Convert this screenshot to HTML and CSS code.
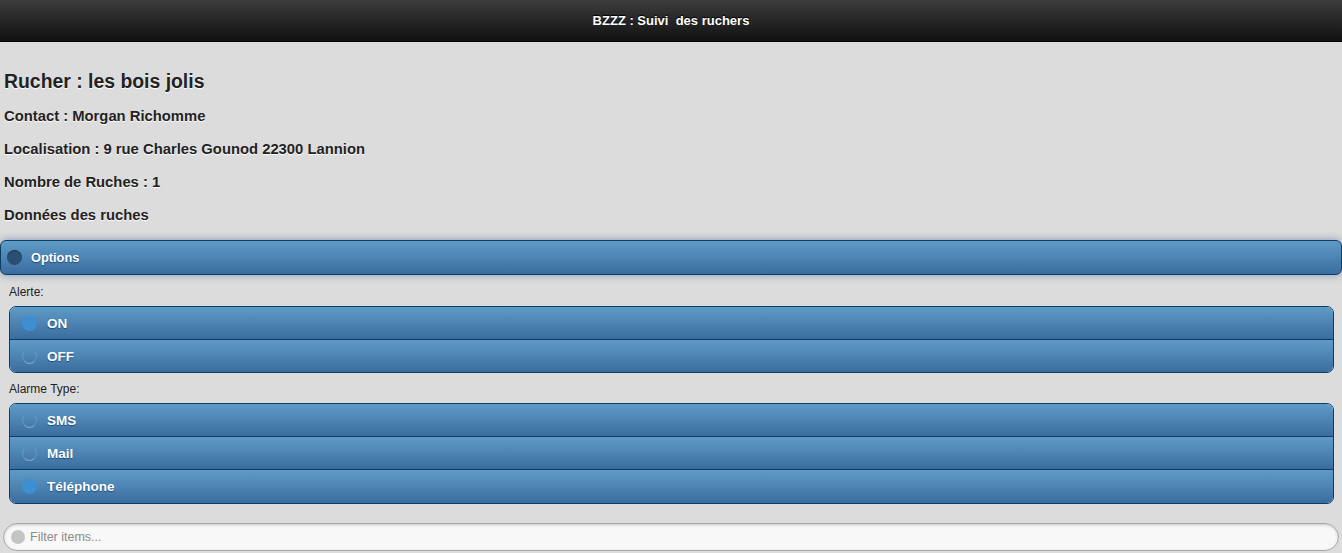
FILE: index.html
```html
<!DOCTYPE html>
<html lang="fr">
<head>
    <meta charset="UTF-8">
    <meta name="viewport" content="width=device-width, initial-scale=1.0">
    <title>BZZZ : Suivi des ruchers</title>
    <link rel="stylesheet" href="styles.css">
</head>
<body>
  <div class="header">
    <h1 class="title">BZZZ : Suivi&nbsp; des ruchers</h1>
  </div>

  <div class="content">
    <h3 class="rucher">Rucher : les bois jolis</h3>
    <p class="info">Contact : Morgan Richomme</p>
    <p class="info">Localisation : 9 rue Charles Gounod 22300 Lannion</p>
    <p class="info">Nombre de Ruches : 1</p>
    <p class="info">Données des ruches</p>

    <div class="options-bar">
      <span class="dot dot-dark"></span>
      <span class="options-text">Options</span>
    </div>

    <div class="field">
      <div class="field-label">Alerte:</div>
      <div class="group">
        <div class="row"><span class="dot dot-on"></span>ON</div>
        <div class="row"><span class="dot dot-off"></span>OFF</div>
      </div>
    </div>

    <div class="field field-type">
      <div class="field-label">Alarme Type:</div>
      <div class="group">
        <div class="row"><span class="dot dot-off"></span>SMS</div>
        <div class="row"><span class="dot dot-off"></span>Mail</div>
        <div class="row row-last"><span class="dot dot-on"></span>Téléphone</div>
      </div>
    </div>

    <div class="filter">
      <span class="search-dot"></span>
      <input class="filter-input" type="text" placeholder="Filter items...">
    </div>
  </div>
</body>
</html>
```

FILE: styles.css
```css
body {
  margin: 0;
  background: #dcdcdc;
  font-family: "Liberation Sans", Arial, sans-serif;
  color: #222;
  overflow: hidden;
}

.header {
  height: 41px;
  background: linear-gradient(#3c3c3c, #111111);
  border-bottom: 1px solid #000;
  display: flex;
  align-items: center;
  justify-content: center;
}

.title {
  margin: 0;
  font-size: 13px;
  font-weight: bold;
  color: #fff;
  text-shadow: 0 -1px 1px #000;
}

.content {
  padding-top: 28px;
}

.rucher {
  margin: 0 0 15px 4px;
  font-size: 19.4px;
  line-height: 22px;
  text-shadow: 0 1px 1px #fff;
}

.info {
  margin: 0 0 15px 4px;
  font-size: 14.8px;
  font-weight: bold;
  line-height: 18px;
  text-shadow: 0 1px 1px #fff;
}

.info:last-of-type {
  margin-bottom: 16px;
}

.options-bar {
  height: 33px;
  display: flex;
  align-items: center;
  border: 1px solid #0b3e66;
  border-radius: 6px;
  background: linear-gradient(#5f9bc7, #3a6d9f);
  box-shadow: 0 0 9px rgba(70, 100, 150, 0.6);
  color: #fff;
}

.options-text {
  font-size: 12.8px;
  font-weight: bold;
  text-shadow: 0 1px 1px #1b4b78;
}

.dot {
  width: 15px;
  height: 15px;
  border-radius: 50%;
  box-sizing: border-box;
  flex-shrink: 0;
}

.dot-dark {
  margin: 0 9px 0 6px;
  background: #2b4f72;
  box-shadow: inset 0 1px 1px rgba(0, 0, 0, 0.3);
}

.dot-on {
  background: #3d8fd1;
}

.dot-off {
  border: 1px solid transparent;
  border-bottom-color: rgba(255, 255, 255, 0.35);
  border-left-color: rgba(255, 255, 255, 0.15);
  border-right-color: rgba(255, 255, 255, 0.15);
}

.field {
  margin: 9px 8px 0 9px;
}

.field-type {
  margin-top: 8px;
}

.field-label {
  font-size: 12px;
  line-height: 16px;
  margin-bottom: 6px;
  color: #222;
}

.group {
  border: 1px solid #0b3e66;
  border-radius: 7px;
  overflow: hidden;
}

.row {
  height: 32px;
  display: flex;
  align-items: center;
  gap: 10px;
  padding-left: 12px;
  background: linear-gradient(#5f9bc7, #3a6d9f);
  color: #fff;
  font-size: 13.5px;
  font-weight: bold;
  text-shadow: 0 1px 1px #1b4b78;
}

.row + .row {
  border-top: 1px solid #0b3e66;
}

.row-last {
  height: 33px;
}

.filter {
  margin: 19px 3px 0 3px;
  height: 26px;
  display: flex;
  align-items: center;
  border: 1px solid #a9a9a9;
  border-radius: 14px;
  background: #f8f8f8;
  box-shadow: inset 0 1px 3px rgba(0, 0, 0, 0.2);
}

.search-dot {
  width: 14px;
  height: 14px;
  margin: 0 5px 0 7px;
  border-radius: 50%;
  background: #c4c4c4;
}

.filter-input {
  flex: 1;
  border: none;
  background: transparent;
  font-family: "Liberation Sans", Arial, sans-serif;
  font-size: 12.5px;
  color: #333;
  outline: none;
  padding: 0;
}

.filter-input::placeholder {
  color: #8a8a8a;
}
```
